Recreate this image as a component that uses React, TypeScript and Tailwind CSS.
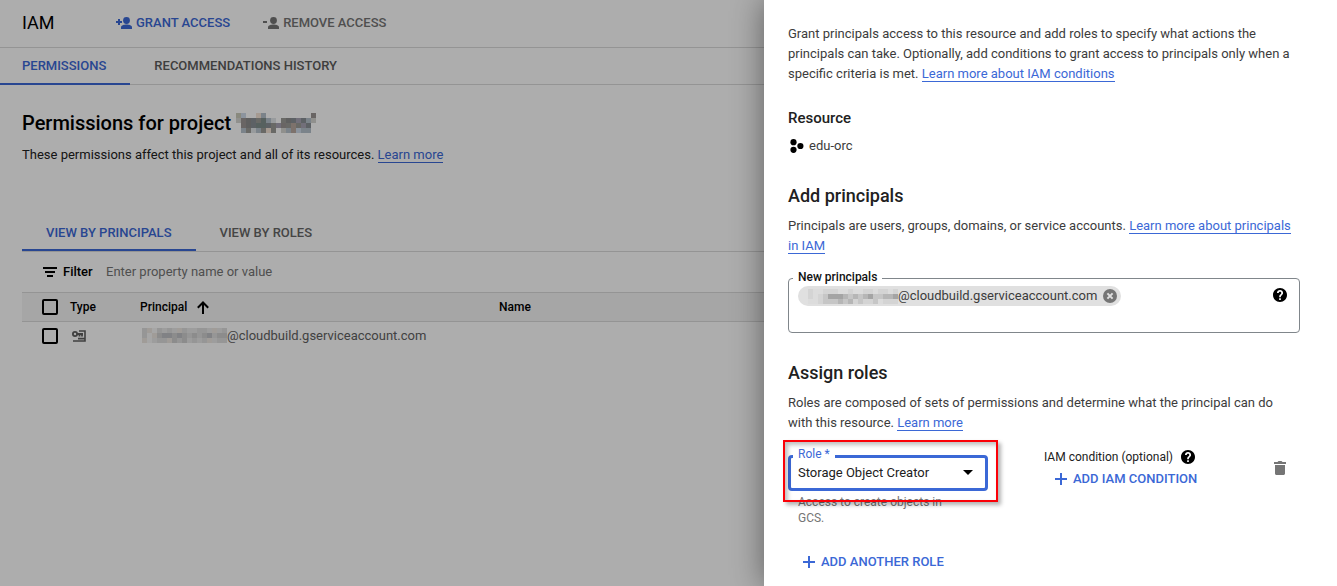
import React from "react";

type MosaicProps = { cell: number; rows: string[]; palette: Record<string, string>; label: string };

/* Pixelated block that hides a private value. */
function Mosaic({ cell, rows, palette, label }: MosaicProps) {
  const width = rows[0].length * cell;
  const height = rows.length * cell;
  return (
    <svg role="img" aria-label={label} width={width} height={height} viewBox={`0 0 ${width} ${height}`} shapeRendering="crispEdges" className="shrink-0">
      {rows.map((row, y) =>
        row.split("").map((c, x) =>
          palette[c] ? <rect key={`${x}-${y}`} x={x * cell} y={y * cell} width={cell} height={cell} fill={palette[c]} /> : null,
        ),
      )}
    </svg>
  );
}

const titlePalette = {
  a: "#cbcbba", b: "#cfdbe9", c: "#f3e4d6", d: "#b5c2cc", e: "#8d8d8d", f: "#80908d",
  g: "#9b9b97", h: "#8a8f96", i: "#b9a8a0", j: "#e1e5e8", k: "#a9a4b4", l: "#d5d5d0", m: "#9b9694",
};
const titleRows = ["ab..cd.........m", "lmehgfdj.gehkhdl", ".mehffhgkmgigkh.", ".dgjdgcg.ldibdd."];

const accountPalette = { a: "#f5f5f5", b: "#e8e8e8", c: "#dedede", d: "#cecece", e: "#bec0c4", f: "#ece6e0" };
const accountRows = ["cfacbcbfcbbccbfbc", "cafdeededcdcdecdd", "fabccfdcdbcbcfbcc"];

const chipPalette = { a: "#dcdcdc", b: "#d4d4d4", c: "#c6c6c6", d: "#b6b6b6", e: "#a4a4a4" };
const chipRows = ["baabbbaabaabbabbab", "babceeedcdcdeccdde", "aabcccdcdbcbbcabbb"];

function PersonIcon({ plus }: { plus?: boolean }) {
  return (
    <svg aria-hidden="true" width="16" height="12" viewBox="0 0 16 12" fill="currentColor" className="shrink-0">
      <circle cx="10.5" cy="3.5" r="3.4" />
      <path d="M5 12v-1.8C5 8.4 8.2 7.6 10.5 7.6S16 8.4 16 10.2V12z" />
      <path d={plus ? "M2 2h2v2h2v2H4v2H2V6H0V4h2z" : "M0 4h4v2H0z"} />
    </svg>
  );
}

function FilterIcon() {
  return (
    <svg aria-hidden="true" width="14" height="10" viewBox="0 0 14 10" fill="currentColor">
      <path d="M0 0h14v2H0zM2 4h10v2H2zM4 8h6v2H4z" />
    </svg>
  );
}

function ArrowUpIcon() {
  return (
    <svg aria-hidden="true" width="12" height="13" viewBox="0 0 12 13" fill="none" stroke="currentColor" strokeWidth="2">
      <path d="M6 13V1.5M.8 6.7 6 1.5l5.2 5.2" />
    </svg>
  );
}

function ServiceAccountIcon() {
  return (
    <svg aria-hidden="true" width="14" height="12" viewBox="0 0 14 12" fill="none" stroke="#5f5f5f">
      <circle cx="3" cy="4" r="2.1" strokeWidth="1.8" />
      <path d="M5 4h6M7.5 4v2.4M10 4v2.4" strokeWidth="1.8" />
      <path d="M7 1h6v10H1M6 8.6h7" strokeWidth="1.6" />
    </svg>
  );
}

function HelpIcon() {
  return (
    <svg aria-hidden="true" width="14" height="14" viewBox="2 2 20 20" fill="currentColor">
      <path d="M12 2C6.48 2 2 6.48 2 12s4.48 10 10 10 10-4.48 10-10S17.52 2 12 2zm1.2 17h-2.4v-2.4h2.4V19zm2.2-7.6-.9.92c-.8.8-1.3 1.38-1.3 2.88h-2.4v-.6c0-1.1.5-2.1 1.2-2.8l1.24-1.26c.37-.36.59-.86.59-1.41 0-1.1-.72-1.85-1.75-1.85S10.2 8 10.2 9H7.7c0-2.35 1.9-4.1 4.3-4.1s4.4 1.75 4.4 4.1c0 .9-.4 1.7-1 2.4z" />
    </svg>
  );
}

function ResourceIcon() {
  return (
    <svg aria-hidden="true" width="14" height="14" viewBox="0 0 14 14" fill="#000">
      <circle cx="3.5" cy="3.2" r="3.1" />
      <circle cx="3.5" cy="10.8" r="3.1" />
      <circle cx="10.4" cy="7" r="3.1" />
    </svg>
  );
}

function PlusIcon() {
  return (
    <svg aria-hidden="true" width="12" height="12" viewBox="0 0 12 12" fill="currentColor">
      <path d="M5 0h2v5h5v2H7v5H5V7H0V5h5z" />
    </svg>
  );
}

function RemoveIcon() {
  return (
    <svg aria-hidden="true" width="14" height="14" viewBox="0 0 14 14">
      <circle cx="7" cy="7" r="7" fill="#757575" />
      <path d="m4.4 4.4 5.2 5.2m0-5.2L4.4 9.6" stroke="#e0e0e0" strokeWidth="2" />
    </svg>
  );
}

function TrashIcon() {
  return (
    <svg aria-hidden="true" width="12" height="14" viewBox="0 0 12 14" fill="#757575">
      <path d="M0 1h3.5l1-1h3l1 1H12v2H0zM1 4h10v8.5c0 .8-.7 1.5-1.5 1.5h-7C1.7 14 1 13.3 1 12.5z" />
    </svg>
  );
}

function TextLink({ children }: { children: React.ReactNode }) {
  return (
    <a href="#learn" className="border-b border-[#3b68d6] text-[#3b68d6]">
      {children}
    </a>
  );
}

function Checkbox({ label }: { label: string }) {
  return <input type="checkbox" aria-label={label} className="block size-4 appearance-none rounded-xs border-2 border-black" />;
}

function IamPage() {
  return (
    <main className="relative min-w-0 flex-1 overflow-hidden bg-white">
      <header className="flex h-12 items-center border-b border-[#dadada] pb-[2px] pl-[22px]">
        <h1 className="w-[94px] text-lg text-black">IAM</h1>
        <button type="button" className="flex items-center gap-1 whitespace-nowrap font-medium text-[#3b68d6]">
          <PersonIcon plus /> GRANT ACCESS
        </button>
        <button type="button" className="ml-[33px] flex items-center gap-1 whitespace-nowrap font-medium text-[#757575]">
          <PersonIcon /> REMOVE ACCESS
        </button>
      </header>
      <nav className="flex h-[37px] border-b border-[#dadada] font-medium">
        <a href="#permissions" className="-mb-px border-b-2 border-[#3b68d6] pt-2 pr-6 pl-[22px] text-[#3b68d6]">
          PERMISSIONS
        </a>
        <a href="#history" className="whitespace-nowrap px-6 pt-2 text-[#5c5c5c]">
          RECOMMENDATIONS HISTORY
        </a>
      </nav>
      <section className="pl-[22px]">
        <h2 className="flex items-center gap-[5px] pt-6 text-xl font-medium whitespace-nowrap text-black">
          Permissions for project <Mosaic cell={5} rows={titleRows} palette={titlePalette} label="Hidden project name" />
        </h2>
        <p className="pt-2 text-[#212121]">
          These permissions affect this project and all of its resources. <TextLink>Learn more</TextLink>
        </p>
        <div className="mt-[50px] flex h-[37px] border-b border-[#dadada] font-medium">
          <a href="#by-principals" className="border-b-2 border-[#3b68d6] px-6 pt-2 text-[#3b68d6]">
            VIEW BY PRINCIPALS
          </a>
          <a href="#by-roles" className="px-6 pt-2 text-[#666]">
            VIEW BY ROLES
          </a>
        </div>
        <div className="flex h-10 items-center pl-[21px]">
          <label htmlFor="filter" className="flex w-[63px] items-center gap-[6px] font-medium text-black">
            <FilterIcon /> Filter
          </label>
          <input id="filter" placeholder="Enter property name or value" className="w-80 outline-none placeholder:text-[#757575]" />
        </div>
        <table className="w-full table-fixed text-left">
          <colgroup>
            <col className="w-12" />
            <col className="w-[70px]" />
            <col className="w-[359px]" />
            <col />
          </colgroup>
          <thead>
            <tr className="h-[29px] border-y border-[#dadada] bg-[#f5f5f5] text-xs text-black">
              <th className="pl-5"><Checkbox label="Select all principals" /></th>
              <th className="font-medium">Type</th>
              <th className="font-medium" aria-sort="ascending">
                <span className="flex items-center gap-[10px]">Principal <ArrowUpIcon /></span>
              </th>
              <th className="font-medium">Name</th>
            </tr>
          </thead>
          <tbody>
            <tr className="h-7 text-[#616161]">
              <td className="pl-5"><Checkbox label="Select cloudbuild service account" /></td>
              <td className="pl-[2px]"><ServiceAccountIcon /></td>
              <td>
                <span className="flex items-center pl-[2px]">
                  <Mosaic cell={5} rows={accountRows} palette={accountPalette} label="Hidden account number" />@cloudbuild.gserviceaccount.com
                </span>
              </td>
              <td />
            </tr>
          </tbody>
        </table>
      </section>
      <div className="absolute inset-0 bg-black/32" />
    </main>
  );
}

function GrantDrawer() {
  return (
    <aside className="relative w-[573px] shrink-0 bg-white pt-6 pr-[37px] pl-6 text-[#3c3c3c] shadow-[0_0_30px_rgba(0,0,0,0.45)]">
      <p>
        Grant principals access to this resource and add roles to specify what actions the principals can take. Optionally, add conditions to grant access to principals only when a specific criteria is met. <TextLink>Learn more about IAM conditions</TextLink>
      </p>
      <h3 className="mt-6 text-[15px] font-medium text-[#212121]">Resource</h3>
      <p className="mt-2 flex items-center gap-[5px] pl-[2px]">
        <ResourceIcon /> edu-orc
      </p>

      <h2 className="mt-[26px] text-lg font-medium text-[#212121]">Add principals</h2>
      <p className="mt-[6px]">
        Principals are users, groups, domains, or service accounts. <TextLink>Learn more about principals in IAM</TextLink>
      </p>
      <div className="relative mt-[22px] flex h-[55px] items-start rounded border border-[#80868b] pt-[7px] pr-3 pl-[9px]">
        <label htmlFor="principals" className="absolute -top-[10px] left-1 bg-white px-[5px] text-xs leading-4 font-medium text-[#111]">
          New principals
        </label>
        <span className="flex h-5 items-center rounded-full bg-[#e0e0e0] pr-1 pl-[10px]">
          <Mosaic cell={5} rows={chipRows} palette={chipPalette} label="Hidden account number" />@cloudbuild.gserviceaccount.com
          <button type="button" aria-label="Remove principal" className="ml-[6px] shrink-0"><RemoveIcon /></button>
        </span>
        <input id="principals" className="h-5 min-w-0 flex-1 outline-none" />
        <button type="button" aria-label="Help" className="mt-[2px] text-black"><HelpIcon /></button>
      </div>

      <h2 className="mt-[26px] text-lg font-medium text-[#212121]">Assign roles</h2>
      <p className="mt-[6px]">
        Roles are composed of sets of permissions and determine what the principal can do with this resource. <TextLink>Learn more</TextLink>
      </p>
      <div className="mt-[22px] flex items-start">
        <div className="relative w-[200px]">
          <label htmlFor="role" className="absolute -top-[9px] left-[5px] bg-white px-[5px] text-xs leading-4 text-[#3b68d6]">
            Role *
          </label>
          <select id="role" defaultValue="creator" className="block h-9 w-full appearance-none rounded border-3 border-[#3b68d6] bg-white pl-[7px] text-[#212121] outline-none">
            <option value="creator">Storage Object Creator</option>
          </select>
          <svg aria-hidden="true" width="10" height="5" viewBox="0 0 10 5" className="pointer-events-none absolute top-[15px] right-[15px]">
            <path d="M0 0h10L5 5z" fill="#000" />
          </svg>
          <p className="mt-[3px] w-40 pl-[10px] text-xs leading-4 text-[#757575]">Access to create objects in GCS.</p>
          <div className="pointer-events-none absolute -top-[15px] -left-[5px] h-[62px] w-[215px] border-2 border-[#fb0007] shadow-[3px_3px_4px_rgba(0,0,0,0.3),inset_3px_3px_4px_rgba(0,0,0,0.25)]" />
        </div>
        <div className="-mt-2 ml-14 flex flex-col">
          <span className="flex items-center gap-2 text-xs leading-5 text-[#212121]">
            IAM condition (optional)
            <button type="button" aria-label="Help" className="text-black"><HelpIcon /></button>
          </span>
          <button type="button" className="mt-[2px] flex items-center gap-[6px] pl-[11px] font-medium text-[#3b68d6]">
            <PlusIcon /> ADD IAM CONDITION
          </button>
        </div>
        <button type="button" aria-label="Delete role" className="mt-[6px] mr-[14px] ml-auto"><TrashIcon /></button>
      </div>
      <button type="button" className="mt-[26px] flex items-center gap-[6px] pl-[15px] font-medium text-[#3b68d6]">
        <PlusIcon /> ADD ANOTHER ROLE
      </button>
    </aside>
  );
}

export default function App() {
  return (
    <div className="flex min-h-screen overflow-hidden font-[Roboto,sans-serif] text-[13px] leading-5">
      <IamPage />
      <GrantDrawer />
    </div>
  );
}
